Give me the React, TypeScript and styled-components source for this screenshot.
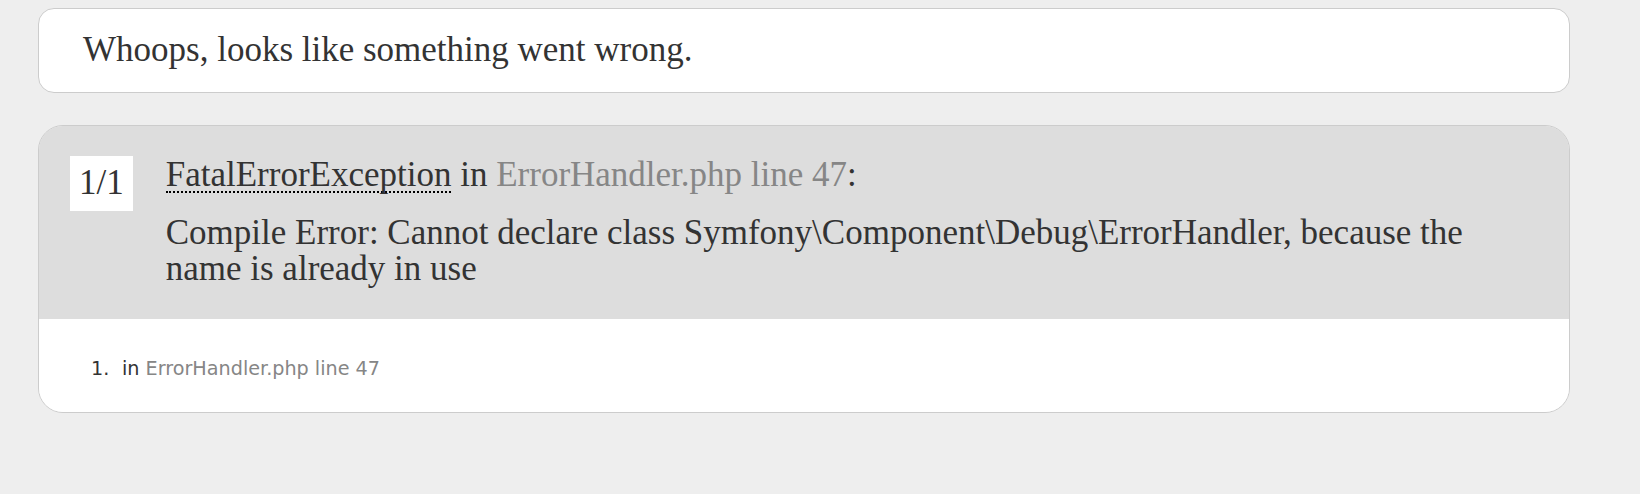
import styled, { createGlobalStyle } from 'styled-components';

const GlobalStyle = createGlobalStyle`
  html, body {
    margin: 0;
    padding: 0;
    background: #eee;
  }
  body {
    font-family: "DejaVu Sans", Verdana, sans-serif;
    color: #333;
  }
`;

const SERIF = `"Liberation Serif", Georgia, "Times New Roman", serif`;

const Page = styled.div`
  padding: 8px 0 0 38px;
  min-height: 486px;
`;

const Content = styled.div`
  width: 1532px;
`;

const Headline = styled.h1`
  margin: 0 0 32px;
  padding: 23px 44px 24px;
  background: #fff;
  border: 1px solid #ccc;
  border-radius: 16px;
  font: 400 35px/36px ${SERIF};
  color: #333;
`;

const Block = styled.div`
  border: 1px solid #ccc;
  border-radius: 25px;
  overflow: hidden;
`;

const ExceptionHead = styled.div`
  display: flex;
  align-items: flex-start;
  gap: 33px;
  padding: 30px 31px 32px;
  background: #ddd;
  font: 400 35px/36px ${SERIF};
  color: #333;
`;

const Counter = styled.span`
  flex: none;
  padding: 9px 9px 10px;
  background: #fff;
  color: #333;
`;

const Titles = styled.div`
  flex: 1;
  min-width: 0;
  padding-top: 1px;
`;

const Title = styled.div`
  margin-bottom: 22px;
`;

const Abbr = styled.abbr`
  display: inline-block;
  line-height: 32px;
  text-decoration: none;
  border-bottom: 2px dotted #000;
  cursor: help;
`;

const FileLink = styled.a`
  color: #868686;
  text-decoration: none;
  cursor: default;
`;

const Message = styled.div`
  word-wrap: break-word;
`;

const Traces = styled.div`
  padding: 17px 44px 13px;
  background: #fff;
`;

const TraceList = styled.ol`
  margin: 0;
  padding: 19px 0 16px;
  list-style: none;
`;

const TraceItem = styled.li`
  display: flex;
  margin-left: 8px;
  padding: 3px 0;
  font-size: 19.2px;
  line-height: 22px;
  color: #333;
`;

const TraceNumber = styled.span`
  flex: none;
  width: 31px;
`;

export default function App() {
  return (
    <>
      <GlobalStyle />
      <Page>
        <Content>
          <Headline>Whoops, looks like something went wrong.</Headline>

          <Block>
            <ExceptionHead>
              <Counter>1/1</Counter>
              <Titles>
                <Title>
                  <Abbr title="Symfony\Component\Debug\Exception\FatalErrorException">FatalErrorException</Abbr>
                  {' in '}
                  <FileLink title="ErrorHandler.php line 47">ErrorHandler.php line 47</FileLink>:
                </Title>
                <Message>
                  Compile Error: Cannot declare class Symfony\Component\Debug\ErrorHandler, because the name is
                  already in use
                </Message>
              </Titles>
            </ExceptionHead>

            <Traces>
              <TraceList>
                <TraceItem>
                  <TraceNumber>1.</TraceNumber>
                  <span>
                    in <FileLink>ErrorHandler.php line 47</FileLink>
                  </span>
                </TraceItem>
              </TraceList>
            </Traces>
          </Block>
        </Content>
      </Page>
    </>
  );
}
